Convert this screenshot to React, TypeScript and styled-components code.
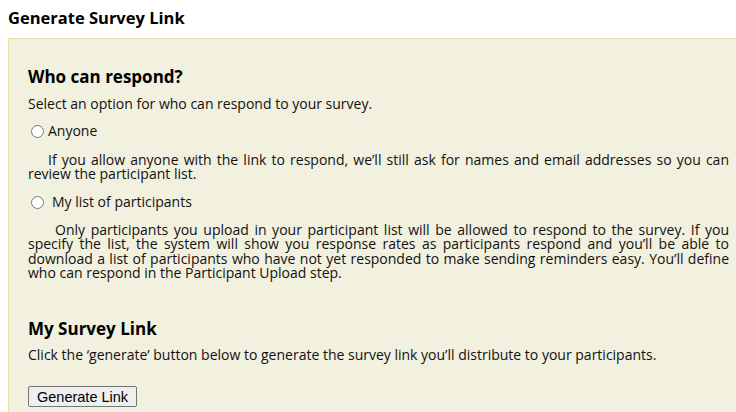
import React from 'react';
import styled, { createGlobalStyle } from 'styled-components';

const GlobalStyle = createGlobalStyle`
  body {
    margin: 8px 0 0 8px;
    background: #ffffff;
    color: #111111;
    font-family: 'Open Sans', 'DejaVu Sans', sans-serif;
    overflow: hidden;
  }
`;

const PageTitle = styled.h2`
  margin: 0 0 10px;
  font-size: 16.5px;
  line-height: 20px;
  font-weight: 700;
  color: #000000;
`;

const Panel = styled.section`
  display: flex;
  flex-direction: column;
  padding: 28px 7px 10px 19px;
  background: #f2f0df;
  border-top: 1px solid #e6e0a2;
  border-left: 1px solid #e6e0a2;
`;

const SectionHeading = styled.h3<{ $top: number }>`
  margin: ${(p) => p.$top}px 0 0;
  font-size: 17px;
  line-height: 20px;
  font-weight: 700;
  color: #000000;
`;

const Intro = styled.p<{ $top: number }>`
  margin: ${(p) => p.$top}px 0 0;
  font-size: 14px;
  line-height: 18px;
`;

const OptionRow = styled.label<{ $top: number; $gap: number }>`
  display: flex;
  align-items: center;
  gap: ${(p) => p.$gap}px;
  margin: ${(p) => p.$top}px 0 0;
  font-size: 14px;
  line-height: 18px;
`;

const Radio = styled.input.attrs({ type: 'radio' })`
  width: 13px;
  height: 13px;
  margin: 0 0 0 3px;
`;

const Help = styled.p<{ $top: number; $indent: number; $lh: number }>`
  margin: ${(p) => p.$top}px 0 0;
  font-size: 14px;
  line-height: ${(p) => p.$lh}px;
  text-align: justify;
  text-indent: ${(p) => p.$indent}px;
`;

const Button = styled.button`
  align-self: flex-start;
  margin-top: 22px;
  height: 21px;
  padding: 0 8px;
  font-family: 'Liberation Sans', Arial, sans-serif;
  font-size: 14.5px;
  color: #000000;
  background: #efefef;
  border: 1px solid #767676;
  border-radius: 2px;
`;

export default function App() {
  return (
    <>
      <GlobalStyle />
      <PageTitle>Generate Survey Link</PageTitle>
      <Panel>
        <SectionHeading $top={0}>Who can respond?</SectionHeading>
        <Intro $top={8}>Select an option for who can respond to your survey.</Intro>
        <OptionRow $top={9} $gap={4}>
          <Radio name="who" />
          Anyone
        </OptionRow>
        <Help $top={13} $indent={20} $lh={13.5}>
          If you allow anyone with the link to respond, we’ll still ask for names and email
          addresses so you can review the participant list.
        </Help>
        <OptionRow $top={13} $gap={8}>
          <Radio name="who" />
          My list of participants
        </OptionRow>
        <Help $top={12} $indent={27} $lh={14.3}>
          Only participants you upload in your participant list will be allowed to respond to
          the survey. If you specify the list, the system will show you response rates as
          participants respond and you’ll be able to download a list of participants who have
          not yet responded to make sending reminders easy. You’ll define who can respond in the
          Participant Upload step.
        </Help>
        <SectionHeading $top={39}>My Survey Link</SectionHeading>
        <Intro $top={7}>
          Click the ‘generate’ button below to generate the survey link you’ll distribute to
          your participants.
        </Intro>
        <Button>Generate Link</Button>
      </Panel>
    </>
  );
}
